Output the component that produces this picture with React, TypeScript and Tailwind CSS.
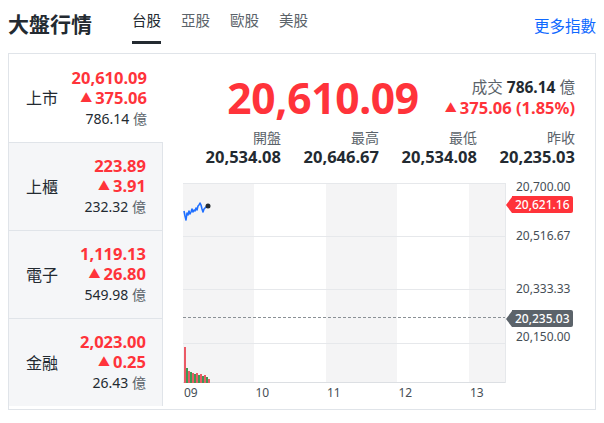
import { Fragment } from 'react';

const FONT = "font-['Noto_Sans','Noto_Sans_CJK_TC',sans-serif]";

type Market = {
  label: string;
  price: string;
  change: string;
  volume: string;
};

const markets: Market[] = [
  { label: '上市', price: '20,610.09', change: '375.06', volume: '786.14' },
  { label: '上櫃', price: '223.89', change: '3.91', volume: '232.32' },
  { label: '電子', price: '1,119.13', change: '26.80', volume: '549.98' },
  { label: '金融', price: '2,023.00', change: '0.25', volume: '26.43' },
];

const stats = [
  { label: '開盤', value: '20,534.08' },
  { label: '最高', value: '20,646.67' },
  { label: '最低', value: '20,534.08' },
  { label: '昨收', value: '20,235.03' },
];

const tabs = ['台股', '亞股', '歐股', '美股'];

// price line for the first ~20 minutes of trading (plot coords)
const line: [number, number][] = [
  [1, 28], [2, 33], [3, 37], [4, 30], [5, 32], [6, 28], [7, 31], [8, 29],
  [9, 26], [10, 29], [11, 27], [12, 28], [13, 25], [14, 27], [15, 23],
  [16, 22], [17, 20], [18, 22], [19, 26], [20, 29], [21, 26], [22, 25],
  [23, 24], [25, 23],
];

// volume bars: [x, height, up]
const bars: [number, number, boolean][] = [
  [1, 36, true], [3, 15, false], [5, 12, true], [7, 11, false], [9, 10, true],
  [11, 9, false], [13, 10, true], [15, 8, false], [17, 9, true], [19, 7, false],
  [21, 8, true], [23, 6, false], [25, 4, true],
];

function Up() {
  return <span className="mr-[3px] inline-block text-[12px] align-[1px]">▲</span>;
}

function MarketRow({ m, first }: { m: Market; first: boolean }) {
  return (
    <div
      className={
        'h-[88px] flex items-center justify-between pl-[17px] pr-[16px] ' +
        (first ? 'bg-white' : 'bg-[#f5f6f8] border-t border-[#e0e4e9] border-r')
      }
    >
      <span className="text-[16px] text-[#232a31]">{m.label}</span>
      <div className="flex flex-col items-end">
        <span className="text-[16.5px] leading-[20px] font-bold text-[#ff333a]">{m.price}</span>
        <span className="text-[16.5px] leading-[20px] font-bold text-[#ff333a]">
          <Up />
          {m.change}
        </span>
        <span className="text-[14px] leading-[20px] text-[#232a31]">
          {m.volume} <span className="text-[#5b636a]">億</span>
        </span>
      </div>
    </div>
  );
}

function Chart() {
  const ys = [
    { t: '20,700.00', y: 4 },
    { t: '20,516.67', y: 53 },
    { t: '20,333.33', y: 106 },
    { t: '20,150.00', y: 154 },
  ];
  const hours = ['09', '10', '11', '12', '13'];
  return (
    <div className="relative h-[222px]">
      <svg width="323" height="201" className="absolute left-0 top-0">
        <rect x="0" y="0" width="71" height="200" fill="#f4f4f5" />
        <rect x="143" y="0" width="71" height="200" fill="#f4f4f5" />
        <rect x="286" y="0" width="36" height="200" fill="#f4f4f5" />
        <line x1="0" y1="0.5" x2="322" y2="0.5" stroke="#e6e8eb" />
        <line x1="0" y1="53.5" x2="322" y2="53.5" stroke="#e6e8eb" />
        <line x1="0" y1="106.5" x2="322" y2="106.5" stroke="#e6e8eb" />
        <line x1="0" y1="160.5" x2="322" y2="160.5" stroke="#e6e8eb" />
        <line x1="0" y1="199.5" x2="322" y2="199.5" stroke="#dcdfe3" />
        <line x1="322.5" y1="0" x2="322.5" y2="200" stroke="#e6e8eb" />
        <line x1="0" y1="134.5" x2="322" y2="134.5" stroke="#8b9196" strokeDasharray="3 2" />
        {bars.map(([x, h, up], i) => (
          <rect key={i} x={x} y={200 - h} width="2" height={h} fill={up ? '#eb5a66' : '#3e9a55'} />
        ))}
        <polyline
          points={line.map(([x, y]) => `${x},${y}`).join(' ')}
          fill="none"
          stroke="#1f6fff"
          strokeWidth="1.6"
          strokeLinejoin="round"
        />
        <circle cx="25" cy="23" r="2.5" fill="#232a31" />
      </svg>
      {ys.map((l) => (
        <span
          key={l.t}
          className="absolute left-[333px] text-[12px] leading-[14px] text-[#464e56]"
          style={{ top: l.y - 7 }}
        >
          {l.t}
        </span>
      ))}
      <div className="absolute left-[323px] top-[13px] flex items-center">
        <span className="w-0 h-0 border-y-[8px] border-y-transparent border-r-[6px] border-r-[#ff333a]" />
        <span className="h-[17px] px-[3px] bg-[#ff333a] rounded-r-[2px] text-white text-[12px] leading-[17px] font-medium">
          20,621.16
        </span>
      </div>
      <div className="absolute left-[323px] top-[127px] flex items-center">
        <span className="w-0 h-0 border-y-[8px] border-y-transparent border-r-[6px] border-r-[#5b636a]" />
        <span className="h-[17px] px-[3px] bg-[#5b636a] rounded-r-[2px] text-white text-[12px] leading-[17px] font-medium">
          20,235.03
        </span>
      </div>
      {hours.map((h, i) => (
        <span
          key={h}
          className="absolute top-[203px] text-[12px] leading-[14px] text-[#464e56]"
          style={{ left: 1 + i * 71.5 }}
        >
          {h}
        </span>
      ))}
    </div>
  );
}

export default function App() {
  return (
    <div className={`w-[604px] h-[423px] bg-white text-[#232a31] ${FONT}`}>
      <div className="h-[53px] flex items-end px-2">
        <h2 className="text-[21px] leading-[30px] font-bold mb-[14px]">大盤行情</h2>
        <div className="ml-[40px] flex gap-[20px]">
          {tabs.map((t, i) => (
            <div key={t} className="flex flex-col items-stretch">
              <span
                className={
                  'text-[14.5px] leading-[20px] mb-[11px] ' + (i === 0 ? 'text-[#232a31]' : 'text-[#5b636a]')
                }
              >
                {t}
              </span>
              <span className={'h-[3px] mb-[9px] ' + (i === 0 ? 'bg-[#232a31]' : 'bg-transparent')} />
            </div>
          ))}
        </div>
        <a className="ml-auto mb-[17px] text-[15.5px] leading-[20px] text-[#0f69ff]">更多指數</a>
      </div>

      <div className="mx-2 h-[357px] border border-[#e0e4e9] flex">
        <div className="w-[154px] flex flex-col">
          {markets.map((m, i) => (
            <MarketRow key={m.label} m={m} first={i === 0} />
          ))}
        </div>

        <div className="flex-1 flex flex-col pl-[20px] pr-[20px]">
          <div className="mt-[24px] h-[40px] flex items-center justify-end">
            <span className="text-[42.5px] leading-none font-bold text-[#ff333a] tracking-[-0.3px]">20,610.09</span>
            <div className="ml-[26px] flex flex-col items-end">
              <span className="text-[15.5px] leading-[20px]">
                <span className="text-[#5b636a]">成交</span> <span className="font-bold">786.14</span>{' '}
                <span className="text-[#5b636a]">億</span>
              </span>
              <span className="text-[16.5px] leading-[22px] font-bold text-[#ff333a]">
                <Up />
                375.06 (1.85%)
              </span>
            </div>
          </div>

          <div className="mt-[10px] grid grid-cols-4">
            {stats.map((s) => (
              <Fragment key={s.label}>
                <div className="flex flex-col items-end">
                  <span className="text-[14px] leading-[20px] text-[#5b636a]">{s.label}</span>
                  <span className="text-[16.5px] leading-[18px] font-bold">{s.value}</span>
                </div>
              </Fragment>
            ))}
          </div>

          <div className="mt-[17px]">
            <Chart />
          </div>
        </div>
      </div>
    </div>
  );
}
